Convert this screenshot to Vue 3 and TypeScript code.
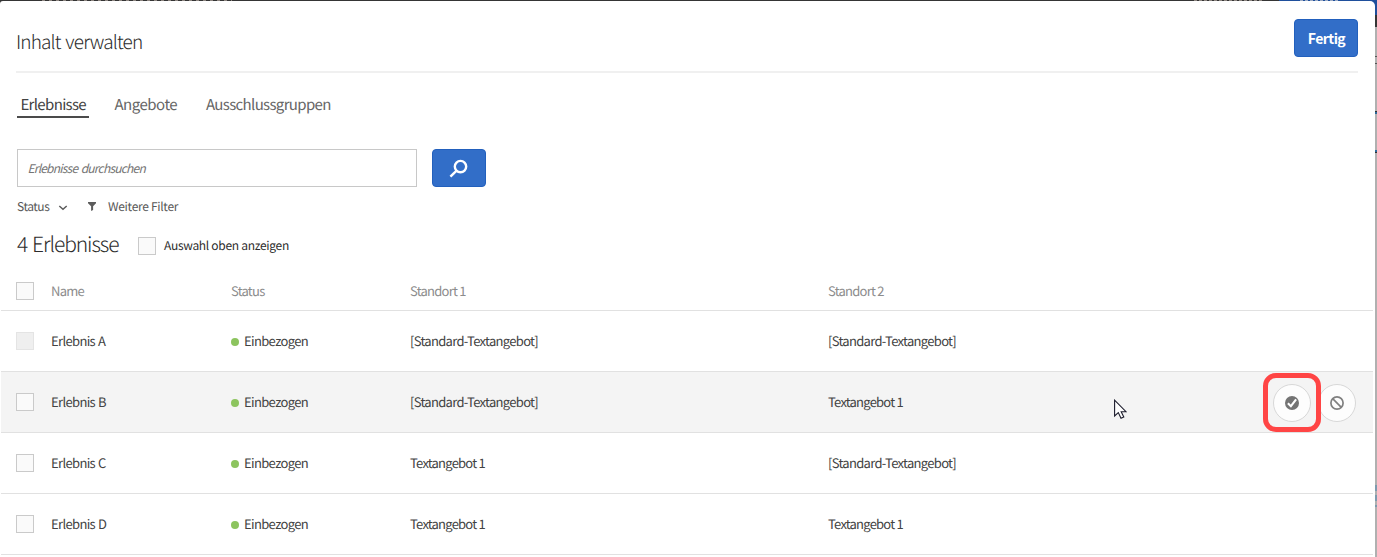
<script setup lang="ts">
interface Experience {
  name: string
  first: string
  second: string
  disabled?: boolean
  hovered?: boolean
}

const standard = '[Standard-Textangebot]'
const offer = 'Textangebot 1'
const experiences: Experience[] = [
  { name: 'Erlebnis A', first: standard, second: standard, disabled: true },
  { name: 'Erlebnis B', first: standard, second: offer, hovered: true },
  { name: 'Erlebnis C', first: offer, second: standard },
  { name: 'Erlebnis D', first: offer, second: offer },
]
</script>

<template>
  <div class="backdrop">
    <div class="behind-top"><i class="seg"></i></div>
    <div class="behind-right"></div>
    <main class="dialog">
      <header class="top">
        <h1>Inhalt verwalten</h1>
        <button class="primary done">Fertig</button>
      </header>
      <nav class="tabs">
        <a class="tab active"><span>Erlebnisse</span></a>
        <a class="tab angebote"><span>Angebote</span></a>
        <a class="tab"><span>Ausschlussgruppen</span></a>
      </nav>
      <div class="search">
        <div class="field"><span>Erlebnisse durchsuchen</span></div>
        <button class="primary find" aria-label="Suchen">
          <svg width="20" height="20" viewBox="0 0 20 20" fill="none" stroke="#fff">
            <circle cx="11.5" cy="8.6" r="5.7" stroke-width="2.4" />
            <path d="M7.6 12.6 L1.4 18.6" stroke-width="2.4" />
          </svg>
        </button>
      </div>
      <div class="filters">
        <span class="status-filter">Status</span>
        <svg class="chev" width="10" height="6" viewBox="0 0 10 6"><path d="M1.3 1 L5 4.3 L8.7 1" fill="none" stroke="#5c5c5c" stroke-width="1.5" /></svg>
        <svg class="funnel" width="8" height="9" viewBox="0 0 8 9"><path d="M0 0H8V1.2L5.1 4.2V8L3.1 9V4.2L0 1.2Z" fill="#5c5c5c" /></svg>
        <span class="more">Weitere Filter</span>
      </div>
      <div class="summary">
        <h2>4 Erlebnisse</h2>
        <span class="box"></span>
        <span class="top-label">Auswahl oben anzeigen</span>
      </div>
      <section class="table">
        <div class="row head">
          <span class="box"></span>
          <span class="name">Name</span>
          <span class="state">Status</span>
          <span class="first">Standort 1</span>
          <span class="second">Standort 2</span>
        </div>
        <div v-for="e in experiences" :key="e.name" class="row" :class="{ hovered: e.hovered }">
          <span class="box" :class="{ disabled: e.disabled }"></span>
          <span class="name">{{ e.name }}</span>
          <span class="state"><i class="dot"></i><span class="inc">Einbezogen</span></span>
          <span class="first"><span :class="e.first === offer ? 'offer' : 'standard'">{{ e.first }}</span></span>
          <span class="second"><span :class="e.second === offer ? 'offer' : 'standard'">{{ e.second }}</span></span>
          <div v-if="e.hovered" class="actions">
            <span class="round">
              <svg width="14" height="14" viewBox="0 0 14 14"><circle cx="7" cy="7" r="7" fill="#747474" /><path d="M2.9 7.2 L5.9 10.2 L11.1 3.4" fill="none" stroke="#fff" stroke-width="2.1" /></svg>
            </span>
            <span class="round">
              <svg width="14" height="14" viewBox="0 0 14 14" fill="none" stroke="#808080" stroke-width="1.7"><circle cx="7" cy="7" r="6.1" /><path d="M2.7 2.7 L11.3 11.3" /></svg>
            </span>
            <span class="marker"></span>
          </div>
        </div>
      </section>
      <svg class="cursor" width="13" height="21" viewBox="0 0 13 21"><path d="M.6 1.2V17L4.3 13.6L7 19.2L9.8 17.9L7.2 12.7H12Z" fill="#fff" stroke="#1b1b2b" stroke-width="1.1" /></svg>
    </main>
  </div>
</template>

<style>
html, body { margin: 0; overflow: hidden; }
</style>

<style scoped>
.backdrop {
  position: relative;
  width: 1377px;
  height: 557px;
  overflow: hidden;
  background: #b0b0b0;
  font-family: "Noto Sans CJK SC", "Noto Sans", sans-serif;
  font-size: 13px;
  color: #424242;
  white-space: nowrap;
  text-rendering: geometricPrecision;
}
.behind-top {
  position: absolute;
  inset: 0 0 auto 0;
  height: 8px;
  background: linear-gradient(90deg, #353535 0 1279px, #1f4f9c 1279px);
}
.seg {
  position: absolute;
  top: 0;
  left: 42px;
  width: 190px;
  height: 1px;
  background: repeating-linear-gradient(90deg, #8d8580 0 3px, #353535 3px 7px);
}
.seg::before, .seg::after {
  content: "";
  position: absolute;
  top: 0;
  left: 1152px;
  width: 70px;
  height: 1px;
  background: repeating-linear-gradient(90deg, #8d8580 0 3px, #353535 3px 5px);
}
.seg::after {
  left: 1258px;
  width: 38px;
  background: repeating-linear-gradient(90deg, #9cabc4 0 3px, #1f4f9c 3px 5px);
}
.behind-right {
  position: absolute;
  top: 0;
  right: 0;
  width: 7px;
  height: 557px;
  background: linear-gradient(#1f4f9c 0 15px, #353535 15px 27px, #b0b0b0 27px 56px, #555 56px 57px, #b0b0b0 57px 63px, #555 63px 64px, #b0b0b0 64px 111px, #333 111px 112px, #2c6a9c 112px 114px, #b0b0b0 114px 150px, #2c6a9c 150px 152px, #333 152px 153px, #b0b0b0 153px 485px, #7d9aae 485px 491px, #b0b0b0 491px 495px, #7d9aae 495px 501px, #b0b0b0 501px 505px, #7d9aae 505px 507px, #b0b0b0 507px);
}
.dialog {
  position: relative;
  box-sizing: border-box;
  width: 1375px;
  height: 556px;
  margin-top: 1px;
  background: #fff;
  border-radius: 3px 5px 0 0;
}
.top {
  box-sizing: border-box;
  display: flex;
  justify-content: space-between;
  height: 72px;
  margin: 0 17px 0 16px;
  padding-top: 18px;
  border-bottom: 2px solid #f0f0f0;
}
h1, h2 { margin: 0; font-weight: 300; color: #2c2c2c; }
h1 { font-size: 19px; line-height: 46px; letter-spacing: -0.85px; word-spacing: 1.4px; }
.primary {
  box-sizing: border-box;
  display: flex;
  align-items: center;
  justify-content: center;
  height: 38px;
  padding: 0;
  border: 1px solid #2260bd;
  border-radius: 4px;
  background: #326ec8;
  color: #fff;
  font: 700 14px/34px "Noto Sans CJK SC", "Noto Sans", sans-serif;
}
.done { width: 64px; padding: 0 0 1px 1px; letter-spacing: -0.55px; }
.tabs { display: flex; gap: 21px; padding: 20px 0 0 17px; height: 25px; }
.tab {
  padding: 0 4px;
  height: 23px;
  line-height: 23px;
  font-size: 15px;
  letter-spacing: -0.65px;
  color: #666;
}
.angebote { width: 62.5px; padding-left: 4.5px; letter-spacing: -0.5px; }
.tab.active { box-sizing: border-box; width: 72px; height: 25px; padding-left: 3.4px; border-bottom: 2px solid #4b4b4b; color: #424242; }
.search { display: flex; gap: 15px; padding: 31px 0 0 17px; }
.field {
  box-sizing: border-box;
  width: 400px;
  height: 38px;
  padding-left: 9.5px;
  border: 1px solid #c8c8c8;
  font-size: 12px;
  font-style: italic;
  line-height: 38px;
  letter-spacing: -0.79px;
  word-spacing: 1.5px;
  color: #747474;
}
.find { width: 54px; }
.filters { display: flex; align-items: center; height: 20px; padding: 9px 0 0 17px; font-size: 12px; line-height: 20px; letter-spacing: -0.3px; color: #585858; }
.status-filter { width: 41px; padding-top: 2px; letter-spacing: -0.45px; }
.chev { margin-top: 3px; }
.funnel { margin-left: 20px; }
.more { margin-left: 12px; padding-top: 2px; }
.summary { display: flex; align-items: center; height: 38px; padding: 9px 0 0 17px; }
h2 { width: 121px; height: 36px; font-size: 21px; line-height: 36px; letter-spacing: -1.08px; word-spacing: 1.3px; }
.box { box-sizing: border-box; flex: none; width: 18px; height: 18px; border: 1px solid #cacaca; background: #fafafa; }
.summary .box { margin-top: 4px; }
.box.disabled { border-color: #e4e4e4; background: #efefef; }
.top-label { margin-left: 8px; padding-top: 2px; font-size: 12px; letter-spacing: -0.3px; color: #2c2c2c; }
.table { margin: 8px 2px 0 1px; }
.row {
  box-sizing: border-box;
  display: grid;
  grid-template-columns: 35px 180px 179px 418px 1fr auto;
  align-items: center;
  height: 61px;
  padding: 0 17px 0 15px;
  border-bottom: 1px solid #e1e1e1;
  line-height: 20px;
  letter-spacing: -0.65px;
}
.name { word-spacing: 0.6px; }
.head { height: 40px; color: #8c8c8c; letter-spacing: -0.75px; }
.hovered { background: #f4f4f4; }
.standard { letter-spacing: -0.68px; }
.offer { letter-spacing: -0.77px; }
.state { display: flex; align-items: center; }
.dot { width: 8px; height: 8px; margin: 1px 5px 0 0; border-radius: 50%; background: #8cc45e; }
.actions { position: relative; display: flex; gap: 7px; margin-top: 2px; }
.round {
  box-sizing: border-box;
  display: flex;
  align-items: center;
  justify-content: center;
  width: 38px;
  height: 38px;
  border: 1px solid #d8d8d8;
  border-radius: 50%;
  background: #fdfdfd;
}
.marker {
  box-sizing: border-box;
  position: absolute;
  left: -10px;
  top: -11px;
  width: 58px;
  height: 59px;
  border: 5px solid #ff4545;
  border-radius: 13px;
}
.cursor { position: absolute; left: 1114px; top: 398px; }
</style>
